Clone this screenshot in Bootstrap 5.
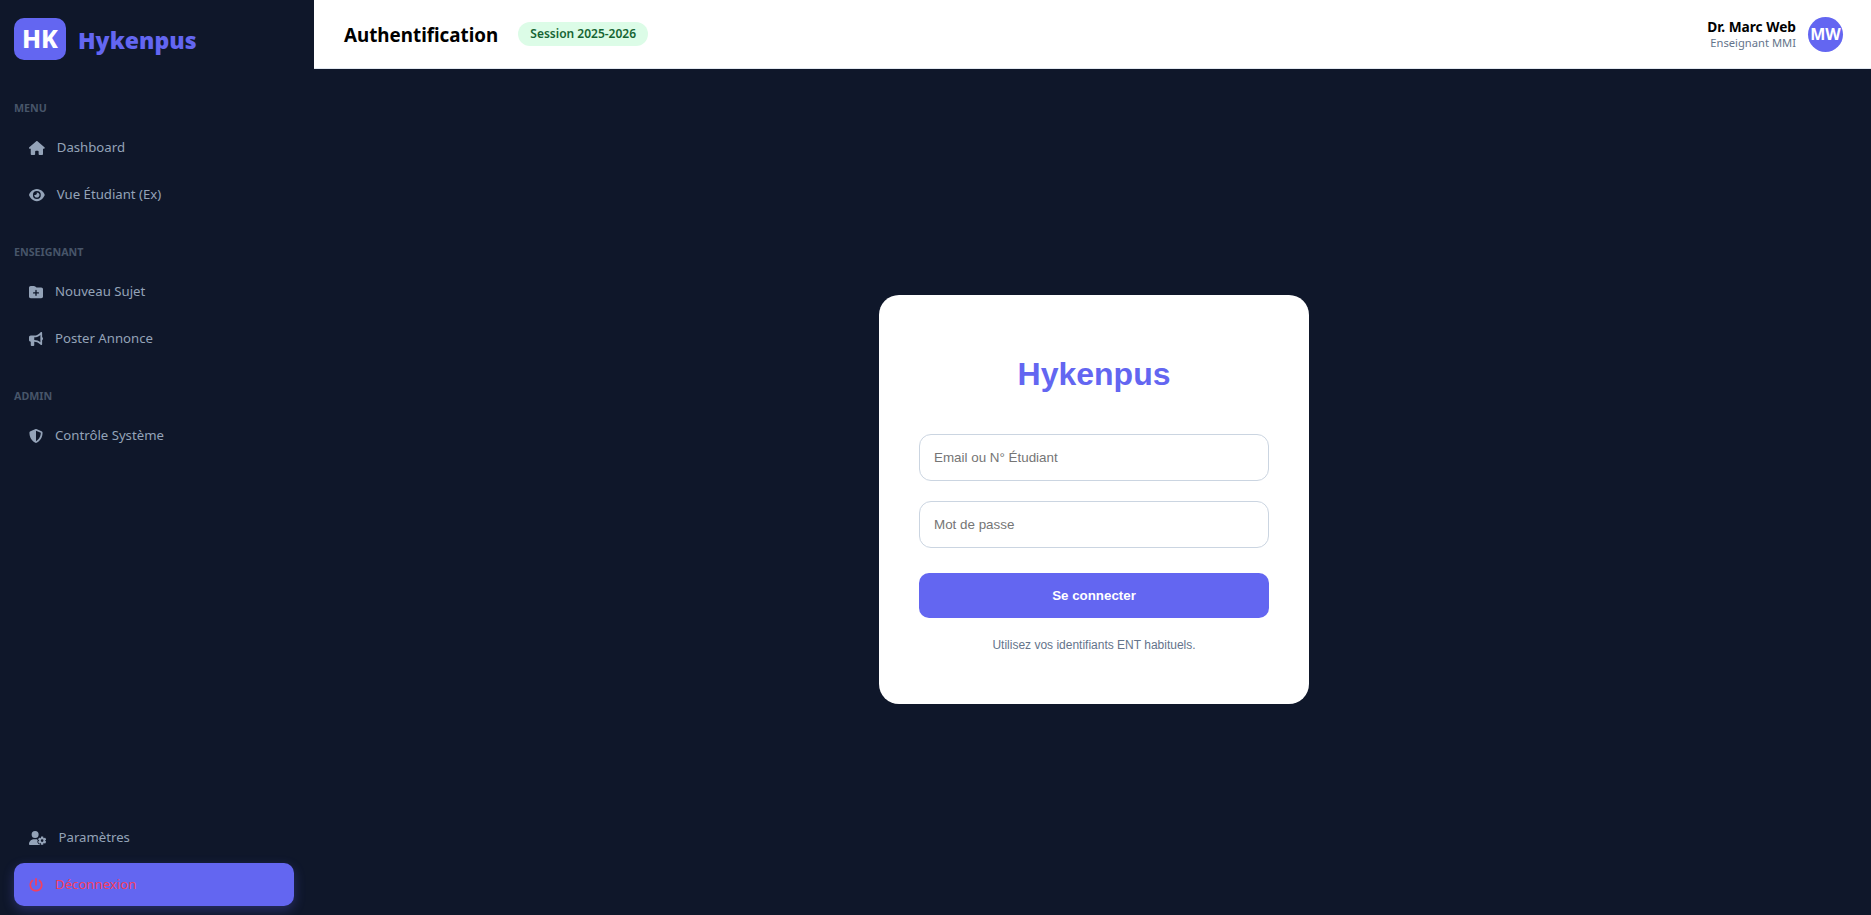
<!DOCTYPE html>
<html lang="fr">
  <head>
    <meta charset="UTF-8" />
    <meta name="viewport" content="width=device-width, initial-scale=1" />
    <title>Hykenpus - Authentification</title>
    <link
      href="https://cdn.jsdelivr.net/npm/bootstrap@5.3.0/dist/css/bootstrap.min.css"
      rel="stylesheet"
    />
    <style>
      body {
        background: #0f172a;
        font-family: "Noto Sans", "Liberation Sans", sans-serif;
      }

      /* Sidebar */
      .sidebar {
        width: 314px;
        height: 915px;
        padding: 18px 20px 9px 14px;
      }
      .brand {
        margin-bottom: 41px;
      }
      .logo-box {
        width: 52px;
        height: 42px;
        background: #6366f1;
        border-radius: 10px;
        color: #fff;
        font-size: 25px;
        font-weight: 800;
      }
      .logo-text {
        color: #6366f1;
        font-size: 23px;
        font-weight: 900;
        margin: 2px 0 0 4px;
      }
      .menu-group {
        margin-bottom: 25px;
      }
      .menu-label {
        color: #475569;
        font-size: 10.7px;
        font-weight: 700;
        line-height: 15px;
        margin-bottom: 10px;
      }
      .sidebar .nav-link {
        color: #94a3b8;
        font-size: 13.2px;
        height: 43px;
        margin-bottom: 4px;
        padding: 0 15px;
        border-radius: 10px;
        gap: 12px;
      }
      .sidebar .nav-link svg {
        height: 14px;
        width: auto;
        fill: currentColor;
      }
      .sidebar .nav-link.logout {
        background: #6366f1;
        color: #f43f5e;
        margin-bottom: 0;
        box-shadow: 0 4px 12px rgba(99, 102, 241, 0.3);
      }

      /* Header */
      .topbar {
        height: 69px;
        padding: 0 28px 0 30px;
        border-bottom: 1px solid #e2e8f0;
      }
      .page-title {
        font-size: 18.8px;
        font-weight: 700;
        color: #000;
        padding-top: 2px;
      }
      .session-badge {
        background: #dcfce7;
        color: #166534;
        font-size: 12px;
        font-weight: 600;
        line-height: 24px;
        padding: 0 12px;
        border-radius: 12px;
        margin-left: 4px;
      }
      .user-name {
        font-size: 13.7px;
        font-weight: 700;
        line-height: 17px;
        color: #000;
      }
      .user-role {
        font-size: 11.2px;
        line-height: 16px;
        color: #64748b;
      }
      .avatar {
        width: 35px;
        height: 35px;
        background: #6366f1;
        color: #fff;
        font-size: 16px;
        font-weight: 700;
      }

      /* Login card */
      .login-area {
        padding: 15px 0 0 3px;
      }
      .login-card {
        width: 430px;
        border: 0;
        border-radius: 20px;
        padding: 40px;
        font-family: "Liberation Sans", Arial, sans-serif;
      }
      .login-title {
        color: #6366f1;
        font-family: inherit;
        font-size: 32px;
        font-weight: 700;
        line-height: 37px;
        margin: 21px 0 41px;
      }
      .login-card .form-control {
        height: 47px;
        padding: 0 14px;
        margin-bottom: 20px;
        border: 1px solid #cbd5e1;
        border-radius: 12px;
        font-size: 13.4px;
      }
      .login-card .form-control::placeholder {
        color: #757575;
      }
      .btn-login {
        height: 45px;
        margin-top: 5px;
        background: #6366f1;
        border: 0;
        border-radius: 10px;
        color: #fff;
        font-size: 13.33px;
        font-weight: 700;
      }
      .login-hint {
        color: #64748b;
        font-size: 12px;
        line-height: 14px;
        margin: 20px 0 0;
        padding-bottom: 12px;
      }
    </style>
  </head>
  <body>
    <div class="d-flex">
      <!-- Sidebar -->
      <aside class="sidebar d-flex flex-column flex-shrink-0">
        <div class="brand d-flex align-items-center gap-2">
          <div class="logo-box d-flex align-items-center justify-content-center">HK</div>
          <span class="logo-text">Hykenpus</span>
        </div>

        <div class="menu-group">
          <div class="menu-label text-uppercase">Menu</div>
          <nav class="nav flex-column">
            <a class="nav-link d-flex align-items-center" href="#">
              <svg viewBox="0 0 576 512"><path d="M575.8 255.5c0 18-15 32.1-32 32.1h-32l.7 160.2c0 2.7-.2 5.4-.5 8.1V472c0 22.1-17.9 40-40 40H456c-1.1 0-2.2 0-3.3-.1c-1.4 .1-2.8 .1-4.2 .1H416 392c-22.1 0-40-17.9-40-40V448 384c0-17.7-14.3-32-32-32H256c-17.7 0-32 14.3-32 32v64 24c0 22.1-17.9 40-40 40H160 128.1c-1.5 0-3-.1-4.5-.2c-1.2 .1-2.4 .2-3.6 .2H104c-22.1 0-40-17.9-40-40V360c0-.9 0-1.9 .1-2.8V287.6H32c-18 0-32-14-32-32.1c0-9 3-17 10-24L266.4 8c7-7 15-8 22-8s15 2 21 7L564.8 231.5c8 7 12 15 11 24z"/></svg>
              Dashboard
            </a>
            <a class="nav-link d-flex align-items-center" href="#">
              <svg viewBox="0 0 576 512"><path d="M288 32c-80.8 0-145.5 36.8-192.6 80.6C48.6 156 17.3 208 2.5 243.7c-3.3 7.9-3.3 16.7 0 24.6C17.3 304 48.6 356 95.4 399.4C142.5 443.2 207.2 480 288 480s145.5-36.8 192.6-80.6c46.8-43.5 78.1-95.4 93-131.1c3.3-7.9 3.3-16.7 0-24.6c-14.9-35.7-46.2-87.7-93-131.1C433.5 68.8 368.8 32 288 32zM144 256a144 144 0 1 1 288 0 144 144 0 1 1 -288 0zm144-64c0 35.3-28.7 64-64 64c-7.1 0-13.9-1.2-20.3-3.3c-5.5-1.8-11.9 1.6-11.7 7.4c.3 6.9 1.3 13.8 3.2 20.7c13.7 51.2 66.4 81.6 117.6 67.9s81.6-66.4 67.9-117.6c-11.1-41.5-47.8-69.4-88.6-71.1c-5.8-.2-9.2 6.1-7.4 11.7c2.1 6.4 3.3 13.2 3.3 20.3z"/></svg>
              Vue Étudiant (Ex)
            </a>
          </nav>
        </div>

        <div class="menu-group">
          <div class="menu-label text-uppercase">Enseignant</div>
          <nav class="nav flex-column">
            <a class="nav-link d-flex align-items-center" href="#">
              <svg viewBox="0 0 512 512"><path d="M512 416c0 35.3-28.7 64-64 64H64c-35.3 0-64-28.7-64-64V96C0 60.7 28.7 32 64 32H181.5c17 0 33.3 6.7 45.3 18.7l26.5 26.5c12 12 28.3 18.7 45.3 18.7H448c35.3 0 64 28.7 64 64V416zM232 376c0 13.3 10.7 24 24 24s24-10.7 24-24V312h64c13.3 0 24-10.7 24-24s-10.7-24-24-24H280V200c0-13.3-10.7-24-24-24s-24 10.7-24 24v64H168c-13.3 0-24 10.7-24 24s10.7 24 24 24h64v64z"/></svg>
              Nouveau Sujet
            </a>
            <a class="nav-link d-flex align-items-center" href="#">
              <svg viewBox="0 0 512 512"><path d="M480 32c0-12.9-7.8-24.6-19.8-29.6s-25.7-2.2-34.9 6.9L381.7 53c-48 48-113.1 75-181 75H192 160 64c-35.3 0-64 28.7-64 64v96c0 35.3 28.7 64 64 64l0 128c0 17.7 14.3 32 32 32h64c17.7 0 32-14.3 32-32V352l8.7 0c67.9 0 133 27 181 75l43.6 43.6c9.2 9.2 22.9 11.9 34.9 6.9s19.8-16.6 19.8-29.6V300.4c18.6-8.8 32-32.5 32-60.4s-13.4-51.6-32-60.4V32zm-64 76.7V240 371.3C357.2 317.8 280.5 288 200.7 288H192V192h8.7c79.8 0 156.5-29.8 215.3-83.3z"/></svg>
              Poster Annonce
            </a>
          </nav>
        </div>

        <div class="menu-group">
          <div class="menu-label text-uppercase">Admin</div>
          <nav class="nav flex-column">
            <a class="nav-link d-flex align-items-center" href="#">
              <svg viewBox="0 0 512 512"><path d="M256 0c4.6 0 9.2 1 13.4 2.9L457.7 82.8c22 9.3 38.4 31 38.3 57.2c-.5 99.2-41.3 280.7-213.6 363.2c-16.7 8-36.1 8-52.8 0C57.3 420.7 16.5 239.2 16 140c-.1-26.2 16.3-47.9 38.3-57.2L242.7 2.9C246.8 1 251.4 0 256 0zm0 66.8V444.8C394 378 431.1 230.1 432 141.4L256 66.8l0 0z"/></svg>
              Contrôle Système
            </a>
          </nav>
        </div>

        <nav class="nav flex-column mt-auto">
          <a class="nav-link d-flex align-items-center" href="#">
            <svg viewBox="0 0 640 512"><path d="M224 0a128 128 0 1 1 0 256A128 128 0 1 1 224 0zM178.3 304h91.4c11.8 0 23.4 1.2 34.5 3.3c-2.1 18.5 7.4 35.6 21.8 44.8c-16.6 10.6-26.7 31.6-20 53.3c4 12.9 9.4 25.5 16.4 37.6s15.2 23.1 24.4 33c15.7 16.9 39.6 18.4 57.2 8.7v.9c0 9.2 2.7 18.5 7.9 26.3H29.7C13.3 512 0 498.7 0 482.3C0 383.8 79.8 304 178.3 304zM436 218.2c0-7 4.5-13.3 11.3-14.8c10.5-2.4 21.5-3.7 32.7-3.7s22.2 1.3 32.7 3.7c6.8 1.5 11.3 7.8 11.3 14.8v30.6c7.9 3.4 15.4 7.7 22.3 12.8l24.9-14.3c6.1-3.5 13.7-2.7 18.5 2.4c7.6 8.1 14.3 17.2 20.1 27.2s10.3 20.4 13.5 31c2.1 6.7-1.1 13.7-7.2 17.2l-25 14.4c.4 4 .7 8.1 .7 12.3s-.2 8.2-.7 12.3l25 14.4c6.1 3.5 9.2 10.5 7.2 17.2c-3.3 10.6-7.8 21-13.5 31s-12.5 19.1-20.1 27.2c-4.8 5.1-12.5 5.9-18.5 2.4l-24.9-14.3c-6.9 5.1-14.3 9.4-22.3 12.8l0 30.6c0 7-4.5 13.3-11.3 14.8c-10.5 2.4-21.5 3.7-32.7 3.7s-22.2-1.3-32.7-3.7c-6.8-1.5-11.3-7.8-11.3-14.8V454.8c-8-3.4-15.6-7.7-22.5-12.9l-24.7 14.3c-6.1 3.5-13.7 2.7-18.5-2.4c-7.6-8.1-14.3-17.2-20.1-27.2s-10.3-20.4-13.5-31c-2.1-6.7 1.1-13.7 7.2-17.2l24.8-14.3c-.4-4.1-.7-8.2-.7-12.4s.2-8.3 .7-12.4L343.8 325c-6.1-3.5-9.2-10.5-7.2-17.2c3.3-10.6 7.7-21 13.5-31s12.5-19.1 20.1-27.2c4.8-5.1 12.4-5.9 18.5-2.4l24.8 14.3c6.9-5.1 14.5-9.4 22.5-12.9V218.2zm92.1 133.5a48.1 48.1 0 1 0 -96.1 0 48.1 48.1 0 1 0 96.1 0z"/></svg>
            Paramètres
          </a>
          <a class="nav-link logout d-flex align-items-center" href="#">
            <svg viewBox="0 0 512 512"><path d="M288 32c0-17.7-14.3-32-32-32s-32 14.3-32 32V256c0 17.7 14.3 32 32 32s32-14.3 32-32V32zM143.5 120.6c13.6-11.3 15.4-31.5 4.1-45.1s-31.5-15.4-45.1-4.1C49.7 115.4 16 181.8 16 256c0 132.5 107.5 240 240 240s240-107.5 240-240c0-74.2-33.8-140.6-86.6-184.6c-13.6-11.3-33.8-9.4-45.1 4.1s-9.4 33.8 4.1 45.1c38.9 32.3 63.5 81 63.5 135.4c0 97.2-78.8 176-176 176s-176-78.8-176-176c0-54.4 24.7-103.1 63.5-135.4z"/></svg>
            Déconnexion
          </a>
        </nav>
      </aside>

      <!-- Main -->
      <main class="flex-grow-1 d-flex flex-column vh-100">
        <header class="topbar bg-white d-flex align-items-center justify-content-between">
          <div class="d-flex align-items-center gap-3">
            <span class="page-title">Authentification</span>
            <span class="session-badge">Session 2025-2026</span>
          </div>
          <div class="d-flex align-items-center gap-2">
            <div class="text-end me-1">
              <div class="user-name">Dr. Marc Web</div>
              <div class="user-role">Enseignant MMI</div>
            </div>
            <div class="avatar rounded-circle d-flex align-items-center justify-content-center">MW</div>
          </div>
        </header>

        <div class="login-area flex-grow-1 d-flex align-items-center justify-content-center">
          <div class="card login-card">
            <h1 class="login-title text-center">Hykenpus</h1>
            <input type="text" class="form-control" placeholder="Email ou N° Étudiant" />
            <input type="password" class="form-control" placeholder="Mot de passe" />
            <button type="button" class="btn btn-login w-100">Se connecter</button>
            <p class="login-hint text-center">Utilisez vos identifiants ENT habituels.</p>
          </div>
        </div>
      </main>
    </div>

    <script src="https://cdn.jsdelivr.net/npm/bootstrap@5.3.0/dist/js/bootstrap.bundle.min.js"></script>
  </body>
</html>
